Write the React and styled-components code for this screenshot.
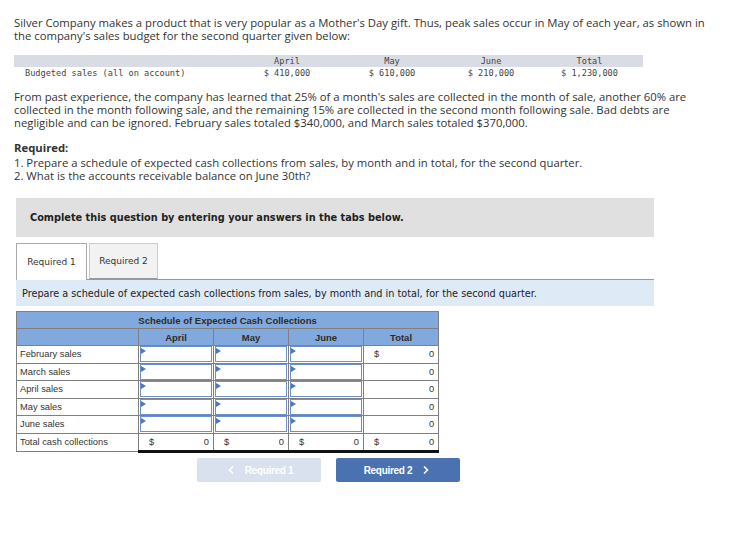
import styled, { createGlobalStyle } from "styled-components";
import { ChevronLeft, ChevronRight } from "lucide-react";

const GlobalStyle = createGlobalStyle`
  body {
    margin: 0;
    background: #fff;
    color: #333;
    font-family: "Open Sans", "Lato", sans-serif;
  }
`;

const Page = styled.div`
  width: 751px;
  padding: 16px 0 40px 14px;
  box-sizing: border-box;
`;

const Para = styled.p`
  margin: ${(p) => p.$mt || 0}px 0 0;
  font-size: 11.3px;
  line-height: 13px;
  color: #333;
  white-space: nowrap;
  strong {
    font-weight: 700;
  }
`;

const Budget = styled.div`
  margin-top: 13px;
  width: 629px;
  font-family: "DejaVu Sans Mono", "Liberation Mono", monospace;
  font-size: 8.6px;
  color: #444;
`;

const BudgetRow = styled.div`
  display: grid;
  grid-template-columns: 222px 102px 108px 90px 107px;
  height: 12px;
  align-items: center;
  background: ${(p) => (p.$head ? "#d9dce4" : "transparent")};
  span {
    text-align: center;
  }
  span:first-child {
    text-align: left;
    padding-left: 11px;
  }
`;

const Required = styled.div`
  margin-top: 12px;
`;

const Panel = styled.div`
  margin: 16px 0 0 2px;
  width: 638px;
`;

const Banner = styled.div`
  height: 39px;
  background: #e0e0e0;
  display: flex;
  align-items: center;
  padding-left: 14px;
  font-family: "DejaVu Sans", Verdana, sans-serif;
  font-weight: 700;
  font-size: 9.75px;
  color: #222;
`;

const Tabs = styled.div`
  margin-top: 6px;
  display: flex;
  gap: 2px;
  border-bottom: 1px solid #999;
  height: 36px;
`;

const Tab = styled.div`
  width: ${(p) => p.$w}px;
  height: ${(p) => (p.$active ? 37 : 36)}px;
  box-sizing: border-box;
  display: flex;
  align-items: center;
  justify-content: center;
  font-family: "DejaVu Sans", Verdana, sans-serif;
  font-size: 9px;
  color: #333;
  background: ${(p) => (p.$active ? "#fff" : "#f2f2f2")};
  border: 1px solid ${(p) => (p.$active ? "#aaa" : "#ccc")};
  border-bottom: ${(p) => (p.$active ? "none" : "1px solid #999")};
`;

const Instruction = styled.div`
  height: 26px;
  background: #deeaf6;
  display: flex;
  align-items: center;
  padding-left: 6px;
  font-family: "DejaVu Sans", Verdana, sans-serif;
  font-size: 9.7px;
  color: #222;
`;

const Schedule = styled.table`
  margin-top: 5px;
  border-collapse: collapse;
  font-family: "Liberation Sans", Arial, sans-serif;
  font-size: 9.3px;
  color: #333;
  table-layout: fixed;
  width: 422px;
`;

const HeadCell = styled.th`
  height: 16px;
  padding: 0;
  background: #82a9dd;
  border: 1px solid #808080;
  font-weight: 700;
  font-size: 9.5px;
  color: #2b2b2b;
  text-align: center;
`;

const Label = styled.td`
  height: 16.5px;
  padding: 0 0 0 3px;
  border: 1px solid #808080;
  white-space: nowrap;
`;

const InputCell = styled.td`
  height: 16.5px;
  padding: 0;
  border: 1px solid #808080;
  position: relative;
  &::before {
    content: "";
    position: absolute;
    left: 2px;
    top: 2px;
    border-top: 3px solid transparent;
    border-bottom: 3px solid transparent;
    border-left: 5px solid #4a78c2;
  }
`;

const Field = styled.div`
  height: 14px;
  margin: 0 1px;
  border: 1px solid #6d90cb;
  background: #fff;
`;

const ValueCell = styled.td`
  height: 16.5px;
  padding: 0 4px 0 10px;
  border: 1px solid #808080;
  border-top: ${(p) => (p.$total ? "1px solid #111" : "1px solid #808080")};
  border-bottom: ${(p) => (p.$total ? "3px solid #111" : "1px solid #808080")};
  div {
    display: flex;
    justify-content: space-between;
  }
`;

const Buttons = styled.div`
  margin: 5px 0 0 181px;
  display: flex;
  gap: 15px;
`;

const NavButton = styled.div`
  width: 124px;
  height: 24px;
  border-radius: 2px;
  display: flex;
  align-items: center;
  justify-content: center;
  gap: 8px;
  font-family: "Liberation Sans", Arial, sans-serif;
  font-weight: 700;
  font-size: 10px;
  letter-spacing: -0.3px;
  color: #fff;
  background: ${(p) => (p.$disabled ? "#d8e1ed" : "#4a72b0")};
`;

const months = ["April", "May", "June"];
const rows = ["February sales", "March sales", "April sales", "May sales", "June sales"];

const Money = ({ sign }) => (
  <div>
    <span>{sign ? "$" : ""}</span>
    <span>0</span>
  </div>
);

export default function App() {
  return (
    <Page>
      <GlobalStyle />
      <Para>
        Silver Company makes a product that is very popular as a Mother's Day gift. Thus, peak sales occur in May of each year, as shown in
        <br />
        the company's sales budget for the second quarter given below:
      </Para>

      <Budget>
        <BudgetRow $head>
          <span></span>
          <span>April</span>
          <span>May</span>
          <span>June</span>
          <span>Total</span>
        </BudgetRow>
        <BudgetRow>
          <span>Budgeted sales (all on account)</span>
          <span>$ 410,000</span>
          <span>$ 610,000</span>
          <span>$ 210,000</span>
          <span>$ 1,230,000</span>
        </BudgetRow>
      </Budget>

      <Para $mt={11}>
        From past experience, the company has learned that 25% of a month's sales are collected in the month of sale, another 60% are
        <br />
        collected in the month following sale, and the remaining 15% are collected in the second month following sale. Bad debts are
        <br />
        negligible and can be ignored. February sales totaled $340,000, and March sales totaled $370,000.
      </Para>

      <Required>
        <Para>
          <strong>Required:</strong>
        </Para>
        <Para $mt={2}>
          1. Prepare a schedule of expected cash collections from sales, by month and in total, for the second quarter.
          <br />
          2. What is the accounts receivable balance on June 30th?
        </Para>
      </Required>

      <Panel>
        <Banner>Complete this question by entering your answers in the tabs below.</Banner>
        <Tabs>
          <Tab $active $w={71}>Required 1</Tab>
          <Tab $w={69}>Required 2</Tab>
        </Tabs>
        <Instruction>
          Prepare a schedule of expected cash collections from sales, by month and in total, for the second quarter.
        </Instruction>

        <Schedule>
          <colgroup>
            <col style={{ width: 122 }} />
            <col style={{ width: 75 }} />
            <col style={{ width: 75 }} />
            <col style={{ width: 75 }} />
            <col style={{ width: 75 }} />
          </colgroup>
          <thead>
            <tr>
              <HeadCell colSpan={5}>Schedule of Expected Cash Collections</HeadCell>
            </tr>
            <tr>
              <HeadCell></HeadCell>
              {months.map((m) => (
                <HeadCell key={m}>{m}</HeadCell>
              ))}
              <HeadCell>Total</HeadCell>
            </tr>
          </thead>
          <tbody>
            {rows.map((r, i) => (
              <tr key={r}>
                <Label>{r}</Label>
                {months.map((m) => (
                  <InputCell key={m}>
                    <Field />
                  </InputCell>
                ))}
                <ValueCell>
                  <Money sign={i === 0} />
                </ValueCell>
              </tr>
            ))}
            <tr>
              <Label>Total cash collections</Label>
              {[...months, "Total"].map((m) => (
                <ValueCell key={m} $total>
                  <Money sign />
                </ValueCell>
              ))}
            </tr>
          </tbody>
        </Schedule>

        <Buttons>
          <NavButton $disabled>
            <ChevronLeft size={12} strokeWidth={3.5} />
            Required 1
          </NavButton>
          <NavButton>
            Required 2
            <ChevronRight size={12} strokeWidth={3.5} />
          </NavButton>
        </Buttons>
      </Panel>
    </Page>
  );
}
